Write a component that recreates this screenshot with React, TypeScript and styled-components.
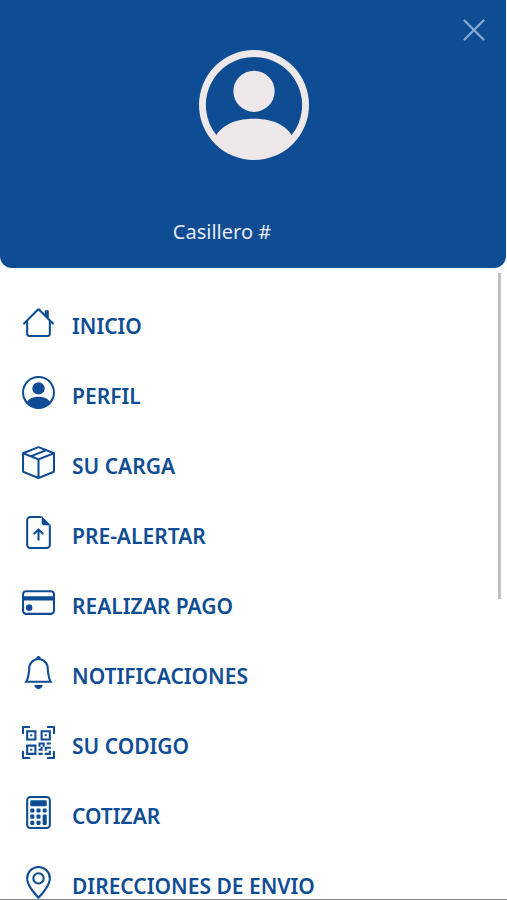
import React from "react";
import styled, { createGlobalStyle } from "styled-components";
import {
  BsBell,
  BsBoxSeam,
  BsCalculator,
  BsCreditCard,
  BsGeoAlt,
  BsPersonCircle,
  BsQrCodeScan,
} from "react-icons/bs";

const brand = "#0e4d94";

const GlobalStyle = createGlobalStyle`
  *, *::before, *::after { box-sizing: border-box; }
  body {
    margin: 0;
    background: #ffffff;
    font-family: "Noto Sans", "Open Sans", sans-serif;
  }
`;

const Drawer = styled.div`
  display: flex;
  flex-direction: column;
  height: 100vh;
  overflow: hidden;
  border-bottom: 1px solid #858585;
`;

const Header = styled.header`
  display: grid;
  grid-template-columns: 1fr auto 1fr;
  align-items: start;
  flex: none;
  margin-right: 1px;
  padding: 16px 18px 20px 20px;
  background: ${brand};
  border-radius: 0 0 12px 12px;
`;

const Avatar = styled.div`
  grid-column: 2;
  display: flex;
  padding-top: 34px;
  color: #eee8ea;
`;

const CloseButton = styled.button`
  grid-column: 3;
  justify-self: end;
  display: flex;
  padding: 0;
  border: 0;
  background: none;
  color: #86a6d0;
  cursor: pointer;
`;

const Locker = styled.p`
  grid-column: 1 / -1;
  margin: 56px 0 0;
  padding-right: 64px;
  color: #e8e8f0;
  font-size: 20px;
  line-height: 32px;
  text-align: center;
`;

const Content = styled.div`
  display: flex;
  flex: 1;
  min-height: 0;
  padding: 5px 6px 0 0;
`;

const Menu = styled.nav`
  flex: 1;
  overflow: hidden;
`;

const MenuList = styled.ul`
  margin: 0;
  padding: 18px 0 0 22px;
  list-style: none;
`;

const MenuLink = styled.a`
  display: flex;
  align-items: center;
  gap: 17px;
  height: 70px;
  color: ${brand};
  font-size: 21px;
  font-weight: 600;
  line-height: 28px;
  text-decoration: none;

  svg {
    flex: none;
    margin-bottom: 8px;
  }
`;

const ScrollThumb = styled.div`
  width: 3px;
  height: 52%;
  background: #c1c1c1;
`;

type IconProps = { size?: number };

const HouseIcon = ({ size = 16 }: IconProps) => (
  <svg width={size} height={size} viewBox="0 0 16 16" fill="currentColor" aria-hidden="true">
    <path
      fillRule="evenodd"
      d="M2 13.5V7h1v6.5a.5.5 0 0 0 .5.5h9a.5.5 0 0 0 .5-.5V7h1v6.5a1.5 1.5 0 0 1-1.5 1.5h-9A1.5 1.5 0 0 1 2 13.5zm11-11V6l-2-2V2.5a.5.5 0 0 1 .5-.5h1a.5.5 0 0 1 .5.5z"
    />
    <path
      fillRule="evenodd"
      d="M7.293 1.5a1 1 0 0 1 1.414 0l6.647 6.646a.5.5 0 0 1-.708.708L8 2.207 1.354 8.854a.5.5 0 1 1-.708-.708L7.293 1.5z"
    />
  </svg>
);

const FileUpIcon = ({ size = 16 }: IconProps) => (
  <svg width={size} height={size} viewBox="0 0 16 16" fill="currentColor" aria-hidden="true">
    <path d="M4 0h5.5v1H4a1 1 0 0 0-1 1v12a1 1 0 0 0 1 1h8a1 1 0 0 0 1-1V4.5h1V14a2 2 0 0 1-2 2H4a2 2 0 0 1-2-2V2a2 2 0 0 1 2-2z" />
    <path d="M9.5 3V0L14 4.5h-3A1.5 1.5 0 0 1 9.5 3z" />
    <path d="M8.5 11.5a.5.5 0 0 1-1 0V7.707L6.354 8.854a.5.5 0 1 1-.708-.708l2-2a.5.5 0 0 1 .708 0l2 2a.5.5 0 0 1-.708.708L8.5 7.707V11.5z" />
  </svg>
);

const CloseIcon = () => (
  <svg width="28" height="28" viewBox="0 0 28 28" fill="none" stroke="currentColor" strokeWidth="2.4" strokeLinecap="round" aria-hidden="true">
    <path d="M4.5 4.5l19 19M23.5 4.5l-19 19" />
  </svg>
);

const items: { label: string; Icon: React.ComponentType<IconProps> }[] = [
  { label: "INICIO", Icon: HouseIcon },
  { label: "PERFIL", Icon: BsPersonCircle },
  { label: "SU CARGA", Icon: BsBoxSeam },
  { label: "PRE-ALERTAR", Icon: FileUpIcon },
  { label: "REALIZAR PAGO", Icon: BsCreditCard },
  { label: "NOTIFICACIONES", Icon: BsBell },
  { label: "SU CODIGO", Icon: BsQrCodeScan },
  { label: "COTIZAR", Icon: BsCalculator },
  { label: "DIRECCIONES DE ENVIO", Icon: BsGeoAlt },
];

export default function App() {
  return (
    <>
      <GlobalStyle />
      <Drawer>
        <Header>
          <Avatar>
            <BsPersonCircle size={110} />
          </Avatar>
          <CloseButton type="button" aria-label="Cerrar">
            <CloseIcon />
          </CloseButton>
          <Locker>Casillero #</Locker>
        </Header>
        <Content>
          <Menu>
            <MenuList>
              {items.map(({ label, Icon }) => (
                <li key={label}>
                  <MenuLink href="#">
                    <Icon size={33} />
                    {label}
                  </MenuLink>
                </li>
              ))}
            </MenuList>
          </Menu>
          <ScrollThumb />
        </Content>
      </Drawer>
    </>
  );
}
